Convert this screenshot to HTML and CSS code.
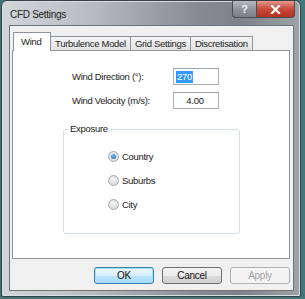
FILE: index.html
```html
<!DOCTYPE html>
<html>
<head>
<meta charset="utf-8">
<link rel="stylesheet" href="styles.css">
</head>
<body>
<div class="desktop">
  <div class="window">
    <div class="titlebar">
      <span class="title">CFD Settings</span>
      <div class="controls">
        <div class="ctl help">?</div>
        <div class="ctl close">
          <svg width="11" height="9" viewBox="0 0 11 9"><path d="M2 1 L9 8 M9 1 L2 8" stroke="#fff" stroke-width="2.2" stroke-linecap="square"/></svg>
        </div>
      </div>
    </div>
    <div class="client">
      <div class="tabs">
        <div class="tab active">Wind</div>
        <div class="tab">Turbulence Model</div>
        <div class="tab">Grid Settings</div>
        <div class="tab">Discretisation</div>
      </div>
      <div class="panel">
        <div class="fields">
          <div class="field">
            <span class="label">Wind Direction (°):</span>
            <div class="input"><span class="sel">270</span></div>
          </div>
          <div class="field">
            <span class="label">Wind Velocity (m/s):</span>
            <div class="input center">4.00</div>
          </div>
        </div>
        <div class="group">
          <div class="legend">Exposure</div>
          <div class="radios">
            <div class="radio"><span class="dot checked"></span>Country</div>
            <div class="radio"><span class="dot"></span>Suburbs</div>
            <div class="radio"><span class="dot"></span>City</div>
          </div>
        </div>
      </div>
      <div class="buttons">
        <div class="btn default">OK</div>
        <div class="btn">Cancel</div>
        <div class="btn disabled">Apply</div>
      </div>
    </div>
  </div>
</div>
</body>
</html>
```

FILE: styles.css
```css
* { box-sizing: border-box; }
html, body { margin: 0; padding: 0; }
body {
  width: 305px;
  height: 299px;
  overflow: hidden;
  background: #3f777b;
  font-family: "Liberation Sans", Arial, sans-serif;
  font-size: 9.5px;
  letter-spacing: -0.3px;
  color: #1a1a1a;
}
.desktop {
  width: 305px;
  height: 299px;
  padding: 0 4px 2px 1px;
}
.window {
  height: 297px;
  border: 1px solid #3b4046;
  border-radius: 6px 6px 2px 2px;
  background: linear-gradient(to right, #d2d6db 0%, #b7bcc1 30%, #878c92 65%, #7d8288 80%, #9ea3a8 100%);
  display: flex;
  flex-direction: column;
  padding: 0 6px 5px 7px;
  box-shadow: inset 0 0 0 1px #d9dde1;
}
.titlebar {
  height: 24px;
  display: flex;
  align-items: flex-start;
  flex: none;
}
.title {
  font-size: 10px;
  color: #222;
  margin-top: 8px;
  margin-left: 1px;
}
.controls {
  margin-left: auto;
  display: flex;
  margin-right: -1px;
}
.ctl {
  height: 17px;
  display: flex;
  align-items: center;
  justify-content: center;
  border: 1px solid #4a4f55;
  border-top: none;
}
.help {
  width: 24px;
  border-radius: 0 0 0 4px;
  background: linear-gradient(#b4b9bf, #8c9298 55%, #7a8086);
  color: #eef1f4;
  font-weight: bold;
  font-size: 11px;
  border-right: none;
}
.close {
  width: 39px;
  border-radius: 0 0 4px 0;
  background: linear-gradient(#e39a8c, #c9493a 50%, #b33322);
}
.client {
  flex: 1;
  background: #f0f0f0;
  border: 1px solid #6f747a;
  display: flex;
  flex-direction: column;
  padding: 6px 3px 6px 2px;
}
.tabs {
  display: flex;
  align-items: flex-end;
  height: 18px;
  padding-left: 1px;
  position: relative;
  z-index: 1;
}
.tab {
  height: 14px;
  padding: 0 4px;
  display: flex;
  align-items: center;
  border: 1px solid #8d949b;
  border-bottom: none;
  border-left: none;
  background: linear-gradient(#f4f4f4, #e3e3e3);
  color: #222;
}
.tab:nth-child(2) { border-left: 1px solid #8d949b; }
.tab.active {
  width: 38px;
  background: #fff;
  border-left: 1px solid #8d949b;
  margin-bottom: -1px;
  height: 19px;
  padding-left: 7px;
  padding-bottom: 2px;
}
.tab.active + .tab { border-left: none; }
.panel {
  flex: 1;
  background: #fff;
  border: 1px solid #8d949b;
  padding: 17px 0 0 50px;
  display: flex;
  flex-direction: column;
}
.fields {
  display: flex;
  flex-direction: column;
  gap: 7px;
}
.field {
  display: flex;
  align-items: center;
  padding-left: 9px;
}
.label {
  width: 101px;
}
.input {
  width: 46px;
  height: 17px;
  border: 1px solid #abadb3;
  border-top-color: #a3a6ab;
  background: #fff;
  padding: 2px 2px;
  display: flex;
  align-items: center;
}
.input.center { justify-content: center; padding-left: 0; }
.sel {
  background: #3399ff;
  color: #fff;
  padding: 0 1px;
  line-height: 12px;
}
.group {
  margin-top: 20px;
  width: 177px;
  height: 105px;
  border: 1px solid #d5dfe5;
  border-radius: 3px;
  position: relative;
  padding: 20px 0 0 44px;
}
.legend {
  position: absolute;
  top: -7px;
  left: 4px;
  background: #fff;
  padding: 0 2px;
}
.radios {
  display: flex;
  flex-direction: column;
  gap: 12px;
}
.radio {
  display: flex;
  align-items: center;
  height: 12px;
  gap: 3px;
}
.dot {
  width: 11px;
  height: 11px;
  border-radius: 50%;
  border: 1px solid #a5a9ae;
  background: radial-gradient(circle at 50% 40%, #f4f4f4, #d2d4d6);
  position: relative;
}
.dot.checked::after {
  content: "";
  position: absolute;
  left: 2px;
  top: 2px;
  width: 5px;
  height: 5px;
  border-radius: 50%;
  background: radial-gradient(circle at 40% 35%, #7cc1ec, #1b5f99);
}
.buttons {
  display: flex;
  justify-content: flex-end;
  gap: 8px;
  padding-top: 8px;
}
.btn {
  width: 60px;
  height: 17px;
  border: 1px solid #707070;
  border-radius: 3px;
  background: linear-gradient(#f2f2f2 0%, #ebebeb 50%, #dddddd 51%, #cfcfcf 100%);
  display: flex;
  align-items: center;
  justify-content: center;
  color: #111;
  font-size: 10px;
}
.btn.default {
  border-color: #3c7fb1;
  background: linear-gradient(#eaf6fd 0%, #d9f0fc 50%, #bee6fd 51%, #a7d9f5 100%);
  box-shadow: inset 0 0 0 1px #a0e1fa;
}
.btn.disabled {
  border-color: #adb2b5;
  background: #f4f4f4;
  color: #a0a0a0;
}
```
